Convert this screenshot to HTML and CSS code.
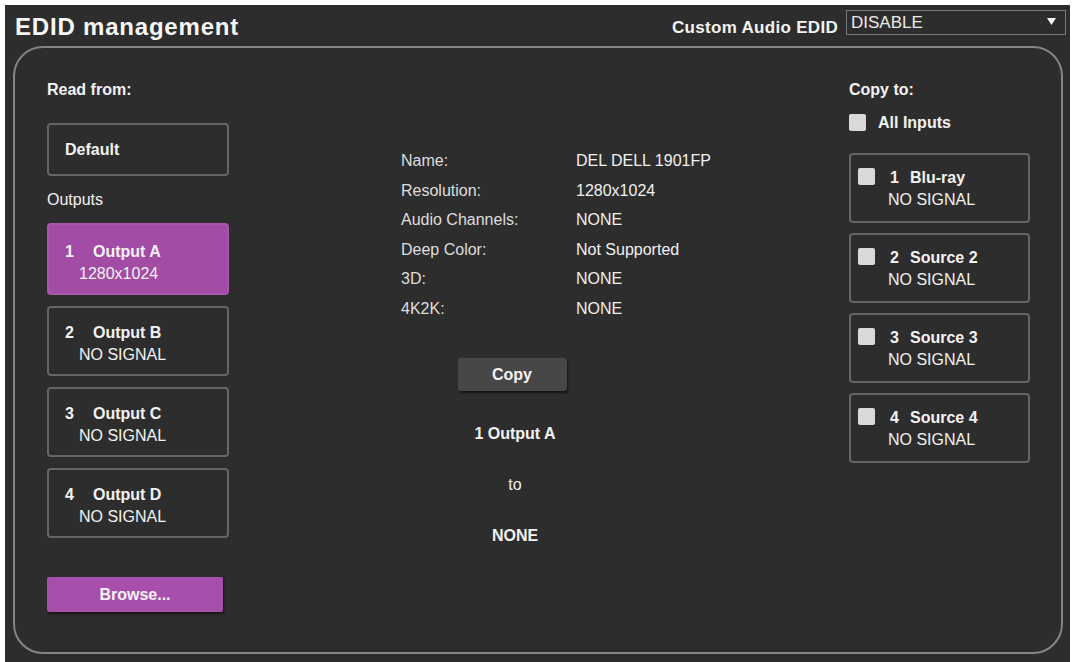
FILE: index.html
```html
<!DOCTYPE html>
<html>
<head>
<meta charset="utf-8">
<link rel="stylesheet" href="styles.css">
</head>
<body>
<div class="frame">
  <div class="header">
    <div class="title">EDID management</div>
    <div class="audio">
      <span class="audio-label">Custom Audio EDID</span>
      <div class="select">
        <span class="select-value">DISABLE</span>
        <svg class="arrow" width="9" height="7" viewBox="0 0 9 7"><polygon points="0,0 9,0 4.5,7" fill="#f4f4f4"/></svg>
      </div>
    </div>
  </div>
  <div class="panel">
    <div class="col-left">
      <div class="heading">Read from:</div>
      <div class="box box-default">Default</div>
      <div class="sub">Outputs</div>
      <div class="box out active">
        <div class="l1"><span class="num">1</span><span class="nm">Output A</span></div>
        <div class="l2">1280x1024</div>
      </div>
      <div class="box out">
        <div class="l1"><span class="num">2</span><span class="nm">Output B</span></div>
        <div class="l2">NO SIGNAL</div>
      </div>
      <div class="box out">
        <div class="l1"><span class="num">3</span><span class="nm">Output C</span></div>
        <div class="l2">NO SIGNAL</div>
      </div>
      <div class="box out">
        <div class="l1"><span class="num">4</span><span class="nm">Output D</span></div>
        <div class="l2">NO SIGNAL</div>
      </div>
      <div class="btn-browse">Browse...</div>
    </div>
    <div class="col-mid">
      <div class="info">
        <div class="lbl">Name:</div><div class="val">DEL DELL 1901FP</div>
        <div class="lbl">Resolution:</div><div class="val">1280x1024</div>
        <div class="lbl">Audio Channels:</div><div class="val">NONE</div>
        <div class="lbl">Deep Color:</div><div class="val">Not Supported</div>
        <div class="lbl">3D:</div><div class="val">NONE</div>
        <div class="lbl">4K2K:</div><div class="val">NONE</div>
      </div>
      <div class="action">
        <div class="btn-copy">Copy</div>
        <div class="summary bold">1 Output A</div>
        <div class="summary">to</div>
        <div class="summary bold">NONE</div>
      </div>
    </div>
    <div class="col-right">
      <div class="heading">Copy to:</div>
      <div class="all"><span class="cb"></span><span class="all-label">All Inputs</span></div>
      <div class="box src">
        <span class="cb"></span>
        <div class="src-text">
          <div class="l1"><span class="snum">1</span><span class="nm">Blu-ray</span></div>
          <div>NO SIGNAL</div>
        </div>
      </div>
      <div class="box src">
        <span class="cb"></span>
        <div class="src-text">
          <div class="l1"><span class="snum">2</span><span class="nm">Source 2</span></div>
          <div>NO SIGNAL</div>
        </div>
      </div>
      <div class="box src">
        <span class="cb"></span>
        <div class="src-text">
          <div class="l1"><span class="snum">3</span><span class="nm">Source 3</span></div>
          <div>NO SIGNAL</div>
        </div>
      </div>
      <div class="box src">
        <span class="cb"></span>
        <div class="src-text">
          <div class="l1"><span class="snum">4</span><span class="nm">Source 4</span></div>
          <div>NO SIGNAL</div>
        </div>
      </div>
    </div>
  </div>
</div>
</body>
</html>
```
FILE: styles.css
```css
html, body {
  margin: 0;
  padding: 0;
  background: #ffffff;
}
body {
  font-family: "Liberation Sans", Arial, sans-serif;
  font-size: 16px;
  line-height: 19px;
  color: #f2f2f2;
}
.frame {
  margin: 5px 0 0 5px;
  width: 1065px;
  height: 657px;
  background: #2d2d2d;
  box-sizing: border-box;
  overflow: hidden;
}
.header {
  height: 41px;
  display: flex;
  align-items: flex-start;
  justify-content: space-between;
  padding: 0 4px 0 10px;
  box-sizing: border-box;
}
.title {
  margin-top: 8px;
  font-size: 24px;
  line-height: 28px;
  font-weight: bold;
  letter-spacing: 0.8px;
  color: #f6f6f6;
}
.audio {
  display: flex;
  align-items: flex-start;
  margin-top: 5px;
}
.audio-label {
  font-size: 17px;
  line-height: 20px;
  font-weight: bold;
  letter-spacing: 0.3px;
  margin-top: 8px;
  margin-right: 8px;
}
.select {
  width: 220px;
  height: 25px;
  box-sizing: border-box;
  border: 1px solid #7a7a7a;
  display: flex;
  align-items: flex-start;
  padding: 0 9px 0 4px;
}
.select-value {
  font-size: 17px;
  line-height: 23px;
  color: #eaeaea;
}
.arrow {
  margin-left: auto;
  margin-top: 7px;
}
.panel {
  margin-left: 8px;
  width: 1050px;
  height: 608px;
  box-sizing: border-box;
  border: 2px solid #858585;
  border-radius: 30px;
  display: flex;
  padding: 32px 31px 0 32px;
}
.col-left {
  width: 182px;
  display: flex;
  flex-direction: column;
}
.heading {
  font-weight: bold;
}
.box {
  box-sizing: border-box;
  border: 2px solid #656565;
  border-radius: 4px;
}
.box-default {
  margin-top: 24px;
  height: 53px;
  padding: 15px 0 0 16px;
  font-weight: bold;
}
.sub {
  margin-top: 14px;
}
.out {
  margin-top: 11px;
  height: 70px;
  padding: 14px 0 0 16px;
  line-height: 22px;
}
.out.active {
  margin-top: 14px;
  height: 72px;
  padding-top: 16px;
  background: #a24ca6;
  border-color: #a955ad;
}
.l1 {
  font-weight: bold;
  display: flex;
}
.num {
  width: 28px;
}
.l2 {
  padding-left: 14px;
}
.btn-browse {
  margin-top: 39px;
  width: 176px;
  height: 35px;
  background: #a74fab;
  border-radius: 2px;
  box-shadow: 1px 2px 2px #161616;
  font-weight: bold;
  text-align: center;
  line-height: 35px;
}
.col-mid {
  flex: 1;
  padding: 66px 0 0 172px;
}
.info {
  display: grid;
  grid-template-columns: 175px auto;
  grid-auto-rows: 29.5px;
  line-height: 29.5px;
}
.lbl {
  color: #dedede;
}
.val {
  color: #f0f0f0;
}
.action {
  width: 228px;
  display: flex;
  flex-direction: column;
  align-items: center;
  padding-top: 35px;
}
.btn-copy {
  width: 109px;
  height: 33px;
  background: #474747;
  border-radius: 3px;
  box-shadow: 1px 2px 2px #161616;
  font-weight: bold;
  text-align: center;
  line-height: 33px;
  margin-right: 6px;
}
.summary {
  margin-top: 32px;
}
.btn-copy + .summary {
  margin-top: 33px;
}
.bold {
  font-weight: bold;
}
.col-right {
  width: 181px;
  display: flex;
  flex-direction: column;
}
.cb {
  display: block;
  flex: none;
  width: 17px;
  height: 17px;
  background: #d9d9d9;
  border-radius: 2px;
}
.all {
  margin-top: 14px;
  display: flex;
  align-items: center;
  height: 19px;
}
.all-label {
  margin-left: 12px;
  font-weight: bold;
}
.src {
  margin-top: 10px;
  height: 70px;
  display: flex;
  align-items: flex-start;
  padding: 12px 0 0 7px;
  line-height: 22px;
}
.col-right .all + .src {
  margin-top: 21px;
}
.src .cb {
  margin-top: 1px;
}
.src-text {
  margin-left: 13px;
}
.snum {
  width: 22px;
  padding-left: 2px;
  box-sizing: border-box;
}
```
